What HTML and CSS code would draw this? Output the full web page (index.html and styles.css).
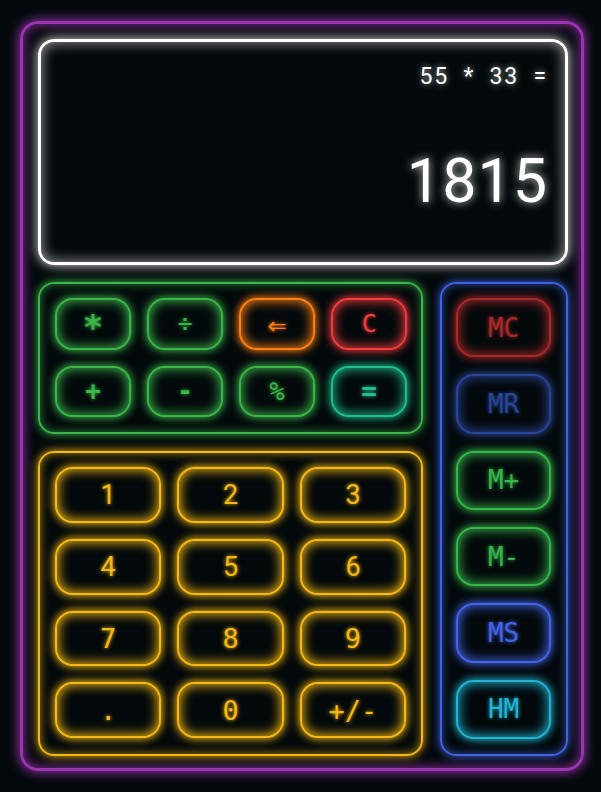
FILE: index.html
```html
<!DOCTYPE html>
<html lang="en">
<head>
<meta charset="utf-8">
<title>Neon Calculator</title>
<link rel="stylesheet" href="styles.css">
</head>
<body>
<div class="calc">
  <div class="display">
    <div class="expr">55 * 33 =</div>
    <div class="result">1815</div>
  </div>
  <div class="keys">
    <div class="left">
      <div class="panel ops">
        <button class="btn op green star">*</button>
        <button class="btn op green">÷</button>
        <button class="btn op orange arrow">⇐</button>
        <button class="btn op red">C</button>
        <button class="btn op green bold">+</button>
        <button class="btn op green bold">-</button>
        <button class="btn op green">%</button>
        <button class="btn op teal bold">=</button>
      </div>
      <div class="panel nums">
        <button class="btn num sans">1</button>
        <button class="btn num sans">2</button>
        <button class="btn num sans">3</button>
        <button class="btn num sans">4</button>
        <button class="btn num sans">5</button>
        <button class="btn num sans">6</button>
        <button class="btn num">7</button>
        <button class="btn num">8</button>
        <button class="btn num">9</button>
        <button class="btn num">.</button>
        <button class="btn num">0</button>
        <button class="btn num">+/-</button>
      </div>
    </div>
    <div class="panel mem">
      <button class="btn m dred">MC</button>
      <button class="btn m dblue">MR</button>
      <button class="btn m mgreen">M+</button>
      <button class="btn m mgreen">M-</button>
      <button class="btn m blue">MS</button>
      <button class="btn m cyan">HM</button>
    </div>
  </div>
</div>
</body>
</html>
```

FILE: styles.css
```css
* { box-sizing: border-box; }
html, body { margin: 0; padding: 0; background: #03090b; }
body { width: 601px; height: 792px; overflow: hidden; font-family: "DejaVu Sans Mono", monospace; }

.calc {
  margin: 21px 0 0 20px;
  width: 564px;
  height: 750px;
  border: 3px solid #9a34b0;
  border-radius: 18px;
  box-shadow: 0 0 12px 1px #9a34b0, inset 0 0 12px 1px rgba(154, 52, 176, 0.8);
  padding: 15px 13px 12px 15px;
  display: flex;
  flex-direction: column;
  gap: 17px;
}

.display {
  height: 226px;
  border: 3px solid #ffffff;
  border-radius: 16px;
  box-shadow: 0 0 12px rgba(255,255,255,0.9), inset 0 0 14px rgba(255,255,255,0.65);
  display: flex;
  flex-direction: column;
  align-items: flex-end;
  padding: 20px 17px 0 0;
  color: #fff;
  font-family: Roboto, "Noto Sans", sans-serif;
}
.expr {
  font-size: 23px;
  line-height: 30px;
  letter-spacing: 1.8px;
  word-spacing: 7px;
  text-shadow: 0 0 6px rgba(255,255,255,0.7);
}
.result {
  margin-top: 53px;
  font-size: 61px;
  line-height: 72px;
  letter-spacing: 1px;
  text-shadow: 0 0 10px rgba(255,255,255,0.8);
}

.keys {
  flex: 1;
  display: flex;
  gap: 17px;
}
.left {
  width: 386px;
  display: flex;
  flex-direction: column;
  gap: 17px;
}
.panel {
  border: 2px solid;
  border-radius: 16px;
}
.ops {
  height: 152px;
  border-color: #3bb54a;
  box-shadow: 0 0 10px #3bb54a, inset 0 0 10px rgba(59,181,74,0.7);
  display: grid;
  grid-template-columns: repeat(4, 1fr);
  grid-template-rows: repeat(2, 1fr);
  gap: 16px;
  padding: 14px 14px 15px 15px;
}
.nums {
  flex: 1;
  border-color: #f5b912;
  box-shadow: 0 0 10px #f5b912, inset 0 0 10px rgba(245,185,18,0.7);
  display: grid;
  grid-template-columns: repeat(3, 1fr);
  grid-template-rows: repeat(4, 1fr);
  gap: 16px;
  padding: 14px 15px 16px 15px;
}
.mem {
  width: 128px;
  border-color: #4163e3;
  box-shadow: 0 0 10px #4163e3, inset 0 0 10px rgba(65,99,227,0.7);
  display: flex;
  flex-direction: column;
  gap: 17px;
  padding: 14px 15px 15px 14px;
}

.btn {
  --c: #3bb54a;
  background: #03090b;
  border: 2px solid var(--c);
  color: var(--c);
  border-radius: 18px;
  box-shadow: 0 0 9px 1px var(--c), inset 0 0 12px 1px var(--c);
  font-family: "DejaVu Sans Mono", monospace;
  padding: 0;
  margin: 0;
  display: flex;
  align-items: center;
  justify-content: center;
  text-shadow: 0 0 4px var(--c);
}
.op { font-size: 25px; }
.op.bold { font-weight: bold; font-size: 26px; }
.op.star { font-weight: bold; font-size: 34px; padding-top: 6px; }
.op.arrow { font-size: 31px; }
.num { --c: #f5b912; font-size: 27px; }
.num.sans { font-family: Roboto, "Noto Sans", sans-serif; }
.m { flex: 1; font-size: 26px; }

.green { --c: #3bb54a; }
.orange { --c: #ff7f14; }
.red { --c: #f03c3c; }
.teal { --c: #1fbf8c; }
.dred { --c: #a8292b; }
.dblue { --c: #2a4595; }
.mgreen { --c: #37b54a; }
.blue { --c: #4264e6; }
.cyan { --c: #22b4d2; }
```
